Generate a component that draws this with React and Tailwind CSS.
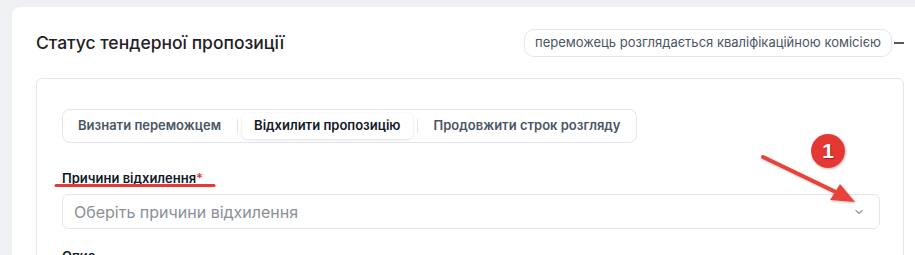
import { ChevronDown } from "lucide-react";

const TABS = [
    { key: "winner", label: "Визнати переможцем" },
    { key: "reject", label: "Відхилити пропозицію" },
    { key: "extend", label: "Продовжити строк розгляду" },
];

function Tabs({ active }) {
    return (
        <div className="inline-flex items-center h-[34px] px-[3px] border border-[#e3e5ea] rounded-lg bg-white">
            {TABS.map((tab, i) => (
                <div key={tab.key} className="flex items-center">
                    {i > 0 && <span className="w-px h-[14px] bg-[#e3e5ea] mx-1" />}
                    <div
                        className={
                            tab.key === active
                                ? "h-[26px] px-3 flex items-center rounded-md bg-white shadow-[0_1px_3px_rgba(0,0,0,0.12)] text-[13px] font-semibold text-[#111827]"
                                : "h-[26px] px-3 flex items-center rounded-md text-[13px] font-semibold text-[#4b5563]"
                        }
                    >
                        {tab.label}
                    </div>
                </div>
            ))}
        </div>
    );
}

function Annotations() {
    return (
        <div className="absolute inset-0 pointer-events-none">
            <svg width="915" height="255" className="absolute left-0 top-0">
                <defs>
                    <filter id="sh" x="-20%" y="-20%" width="140%" height="140%">
                        <feDropShadow dx="1" dy="1" stdDeviation="1" floodColor="#000" floodOpacity="0.25" />
                    </filter>
                </defs>
                <line x1="56" y1="185.5" x2="214" y2="185.5" stroke="#e53935" strokeWidth="3" strokeLinecap="round" />
                <g filter="url(#sh)">
                    <line x1="763" y1="157" x2="842" y2="195" stroke="#e8423b" strokeWidth="4" strokeLinecap="round" />
                    <polygon points="855,202 830,200 840,184" fill="#e8423b" />
                </g>
                <circle cx="828" cy="151" r="17" fill="#e53935" filter="url(#sh)" />
            </svg>
            <div className="absolute left-[811px] top-[134px] w-[34px] h-[34px] flex items-center justify-center text-white text-[21px] font-bold font-['Liberation_Sans',sans-serif] [text-shadow:1px_1px_1px_rgba(0,0,0,0.35)]">
                1
            </div>
        </div>
    );
}

export default function App() {
    return (
        <div className="relative w-[915px] h-[255px] overflow-hidden bg-[#eef0f3] pl-3 pt-[7px] font-['Inter',sans-serif]">
            <div className="w-[916px] bg-white rounded-lg px-6 pt-[22px] pb-6">
                <div className="flex items-center justify-between h-[28px]">
                    <h2 className="text-[17.5px] font-medium text-[#1f2125] leading-none">Статус тендерної пропозиції</h2>
                    <div className="flex items-center">
                        <span className="h-[28px] px-[10px] flex items-center rounded-[10px] border border-[#e3e5ea] text-[13px] text-[#4b5563]">
                            переможець розглядається кваліфікаційною комісією
                        </span>
                        <span className="w-[10px] h-[2px] bg-[#555a60] ml-[2px]" />
                    </div>
                </div>

                <div className="mt-[21px] border border-[#e3e5ea] rounded-md pl-[25px] pr-[23px] pt-[30px] pb-6">
                    <Tabs active="reject" />

                    <div className="mt-[25px] text-[13px] font-semibold text-[#111827] leading-5">
                        Причини відхилення<span className="text-[#e53935]">*</span>
                    </div>
                    <div className="mt-[6px] h-[35px] border border-[#e3e5ea] rounded-md pl-[11px] pr-[14px] flex items-center justify-between">
                        <span className="text-[16px] text-[#8b9098]">Оберіть причини відхилення</span>
                        <ChevronDown size={12} strokeWidth={2} className="text-[#374151]" />
                    </div>

                    <div className="mt-[17px] text-[13px] font-semibold text-[#111827] leading-5">Опис</div>
                </div>
            </div>
            <Annotations />
        </div>
    );
}
